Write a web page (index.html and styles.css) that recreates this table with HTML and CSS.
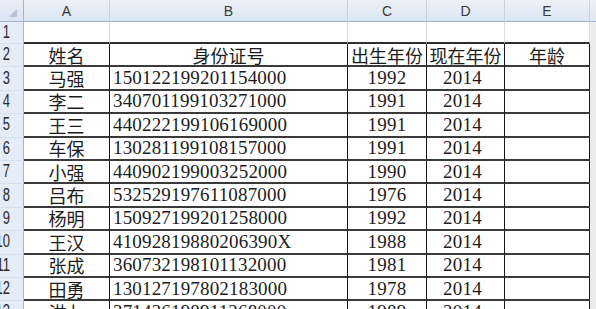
FILE: index.html
```html
<!DOCTYPE html>
<html lang="zh">
<head>
<meta charset="utf-8">
<link rel="stylesheet" href="styles.css">
</head>
<body>
<div class="sheet">
  <div class="corner"><span class="tri"></span></div>
  <div class="colhdr">A</div>
  <div class="colhdr">B</div>
  <div class="colhdr">C</div>
  <div class="colhdr">D</div>
  <div class="colhdr">E</div>
  <div class="colhdr edge"></div>

  <div class="rowhdr"><span>1</span></div>
  <div class="blank"></div><div class="blank"></div><div class="blank"></div><div class="blank"></div><div class="blank"></div><div class="edge"></div>

  <div class="rowhdr"><span>2</span></div>
  <div class="c ctr">姓名</div><div class="c ctr">身份证号</div><div class="c ctr">出生年份</div><div class="c ctr">现在年份</div><div class="c ctr">年龄</div><div class="edge"></div>

  <div class="rowhdr"><span>3</span></div>
  <div class="c ctr">马强</div><div class="c id">150122199201154000</div><div class="c yr">1992</div><div class="c yr now">2014</div><div class="c"></div><div class="edge"></div>

  <div class="rowhdr"><span>4</span></div>
  <div class="c ctr">李二</div><div class="c id">340701199103271000</div><div class="c yr">1991</div><div class="c yr now">2014</div><div class="c"></div><div class="edge"></div>

  <div class="rowhdr"><span>5</span></div>
  <div class="c ctr">王三</div><div class="c id">440222199106169000</div><div class="c yr">1991</div><div class="c yr now">2014</div><div class="c"></div><div class="edge"></div>

  <div class="rowhdr"><span>6</span></div>
  <div class="c ctr">车保</div><div class="c id">130281199108157000</div><div class="c yr">1991</div><div class="c yr now">2014</div><div class="c"></div><div class="edge"></div>

  <div class="rowhdr"><span>7</span></div>
  <div class="c ctr">小强</div><div class="c id">440902199003252000</div><div class="c yr">1990</div><div class="c yr now">2014</div><div class="c"></div><div class="edge"></div>

  <div class="rowhdr"><span>8</span></div>
  <div class="c ctr">吕布</div><div class="c id">532529197611087000</div><div class="c yr">1976</div><div class="c yr now">2014</div><div class="c"></div><div class="edge"></div>

  <div class="rowhdr"><span>9</span></div>
  <div class="c ctr">杨明</div><div class="c id">150927199201258000</div><div class="c yr">1992</div><div class="c yr now">2014</div><div class="c"></div><div class="edge"></div>

  <div class="rowhdr"><span>10</span></div>
  <div class="c ctr">王汉</div><div class="c id">41092819880206390X</div><div class="c yr">1988</div><div class="c yr now">2014</div><div class="c"></div><div class="edge"></div>

  <div class="rowhdr"><span>11</span></div>
  <div class="c ctr">张成</div><div class="c id">360732198101132000</div><div class="c yr">1981</div><div class="c yr now">2014</div><div class="c"></div><div class="edge"></div>

  <div class="rowhdr"><span>12</span></div>
  <div class="c ctr">田勇</div><div class="c id">130127197802183000</div><div class="c yr">1978</div><div class="c yr now">2014</div><div class="c"></div><div class="edge"></div>

  <div class="rowhdr"><span>13</span></div>
  <div class="c ctr">洪七</div><div class="c id">371426198911268000</div><div class="c yr">1989</div><div class="c yr now">2014</div><div class="c"></div><div class="edge"></div>
</div>
</body>
</html>
```

FILE: styles.css
```css
html, body {
  margin: 0;
  padding: 0;
  background: #ffffff;
  overflow: hidden;
}

.sheet {
  display: grid;
  grid-template-columns: 24px 86px 238px 79px 78px 85px 6px;
  grid-template-rows: 22px 22px repeat(12, 23.4px);
  width: 596px;
  height: 309px;
  overflow: hidden;
  font-family: "Liberation Serif", "Noto Sans CJK SC", serif;
  color: #1c1c1c;
  line-height: 20px;
}

.sheet > div {
  box-sizing: border-box;
  display: flex;
  align-items: center;
  overflow: hidden;
  white-space: nowrap;
}

.corner {
  background: linear-gradient(#e9eff8, #dae4f1);
  border-right: 1px solid #9fb4cf;
  border-bottom: 1px solid #9fb4cf;
  position: relative;
}

.tri {
  position: absolute;
  right: 6px;
  bottom: 4px;
  width: 0;
  height: 0;
  border-left: 8px solid transparent;
  border-bottom: 8px solid #b3c3d8;
}

.colhdr {
  justify-content: center;
  background: linear-gradient(#edf2f9, #dae4f1);
  border-right: 1px solid #c3d1e2;
  border-bottom: 1px solid #9fb4cf;
  font-family: "Liberation Sans", Arial, sans-serif;
  font-size: 14px;
  line-height: 16px;
  color: #3a3a3a;
}

.colhdr.edge {
  background: linear-gradient(#eef1f6, #e2e6ec);
  border-right: none;
}

.rowhdr {
  justify-content: flex-end;
  padding-right: 13px;
  background: #e4ecf7;
  border-right: 1px solid #9fb4cf;
  border-bottom: 1px solid #d6e0ec;
  font-family: "Liberation Sans", Arial, sans-serif;
  font-size: 13px;
  line-height: 14px;
  color: #2a2a2a;
}

.rowhdr span {
  display: inline-block;
  flex: none;
  transform: scaleY(1.35);
}

.blank {
  border-right: 1px solid #d8dde5;
  border-bottom: 2px solid #2e2e2e;
}

.edge {
  background: #ececec;
}

.c {
  border-right: 1px solid #161616;
  border-bottom: 2px solid #3a3a3a;
  font-size: 18px;
}

.ctr {
  justify-content: center;
  font-family: "Noto Sans CJK SC", sans-serif;
  font-size: 18px;
}

.id {
  padding-left: 3px;
  font-size: 19px;
  letter-spacing: 0.17px;
}

.yr {
  justify-content: center;
  font-size: 19px;
  letter-spacing: 0.2px;
}

.yr.now {
  padding-right: 6px;
}
```
